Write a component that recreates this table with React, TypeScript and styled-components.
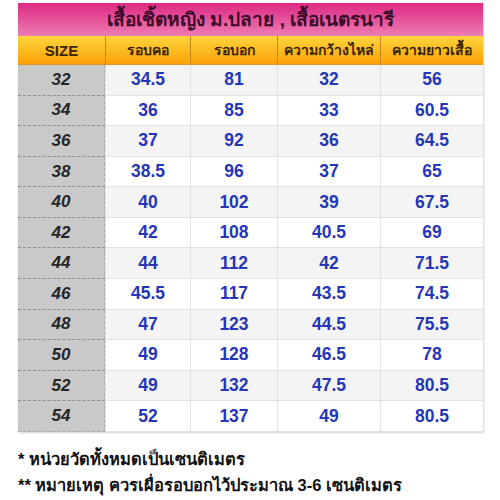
import React from "react";
import styled, { createGlobalStyle } from "styled-components";

const Global = createGlobalStyle`
  html, body { margin: 0; padding: 0; background: #fff; }
  body { font-family: "Liberation Sans", Arial, "Noto Sans", sans-serif; }
`;

const Page = styled.div`
  width: 500px;
  height: 500px;
  padding: 3px 17px 0 18px;
  box-sizing: border-box;
  display: flex;
  flex-direction: column;
`;

const Table = styled.div`
  display: grid;
  grid-template-columns: 87px 85px 87px 103px 103px;
  grid-template-rows: 33px 29px repeat(12, 30.58px);
  width: 465px;
  box-shadow: 1px 1px 2px rgba(0, 0, 0, 0.18);
`;

const Title = styled.div`
  grid-column: 1 / -1;
  display: flex;
  align-items: center;
  justify-content: center;
  background: linear-gradient(#dc2a83, #ef7cb3);
  color: #3a0c2a;
  font-weight: bold;
  font-size: 19px;
  padding-bottom: 2px;
`;

const Head = styled.div<{ $first?: boolean }>`
  display: flex;
  align-items: center;
  justify-content: center;
  background: linear-gradient(#fdd63c, #fba108);
  color: #3a2400;
  font-weight: bold;
  font-size: ${(p) => (p.$first ? "15px" : "14px")};
  border-left: ${(p) => (p.$first ? "none" : "1px solid #c8861e")};
  border-bottom: 1px solid #d99a2a;
`;

const SizeCell = styled.div<{ $last?: boolean }>`
  display: flex;
  align-items: center;
  justify-content: center;
  background: #c9c9c9;
  color: #262626;
  font-weight: bold;
  font-style: italic;
  font-size: 17px;
  border-bottom: 1px dashed ${(p) => (p.$last ? "#aaa" : "#8e8e8e")};
  border-right: 1px dashed #aaa;
`;

const Cell = styled.div<{ $shade: boolean }>`
  display: flex;
  align-items: center;
  justify-content: center;
  background: ${(p) => (p.$shade ? "#f4f4f4" : "#ffffff")};
  color: #2536b8;
  font-weight: bold;
  font-size: 17.5px;
  border-bottom: 1px solid #e2e2e2;
  border-left: 1px solid #e2e2e2;
`;

const Notes = styled.div`
  margin-top: 15px;
  display: flex;
  flex-direction: column;
  gap: 2px;
`;

const Note = styled.div`
  font-size: 16.5px;
  font-weight: bold;
  color: #111;
  line-height: 24px;
`;

const rows: [string, string, string, string, string][] = [
  ["32", "34.5", "81", "32", "56"],
  ["34", "36", "85", "33", "60.5"],
  ["36", "37", "92", "36", "64.5"],
  ["38", "38.5", "96", "37", "65"],
  ["40", "40", "102", "39", "67.5"],
  ["42", "42", "108", "40.5", "69"],
  ["44", "44", "112", "42", "71.5"],
  ["46", "45.5", "117", "43.5", "74.5"],
  ["48", "47", "123", "44.5", "75.5"],
  ["50", "49", "128", "46.5", "78"],
  ["52", "49", "132", "47.5", "80.5"],
  ["54", "52", "137", "49", "80.5"],
];

const headers = ["SIZE", "รอบคอ", "รอบอก", "ความกว้างไหล่", "ความยาวเสื้อ"];

export default function App() {
  return (
    <>
      <Global />
      <Page>
        <Table>
          <Title>เสื้อเชิ้ตหญิง ม.ปลาย , เสื้อเนตรนารี</Title>
          {headers.map((h, i) => (
            <Head key={h} $first={i === 0}>
              {h}
            </Head>
          ))}
          {rows.map((r, ri) => (
            <React.Fragment key={r[0]}>
              <SizeCell $last={ri === rows.length - 1}>{r[0]}</SizeCell>
              {r.slice(1).map((v, ci) => (
                <Cell key={ci} $shade={ri % 2 === 0}>
                  {v}
                </Cell>
              ))}
            </React.Fragment>
          ))}
        </Table>
        <Notes>
          <Note>* หน่วยวัดทั้งหมดเป็นเซนติเมตร</Note>
          <Note>** หมายเหตุ ควรเผื่อรอบอกไว้ประมาณ 3-6 เซนติเมตร</Note>
        </Notes>
      </Page>
    </>
  );
}
